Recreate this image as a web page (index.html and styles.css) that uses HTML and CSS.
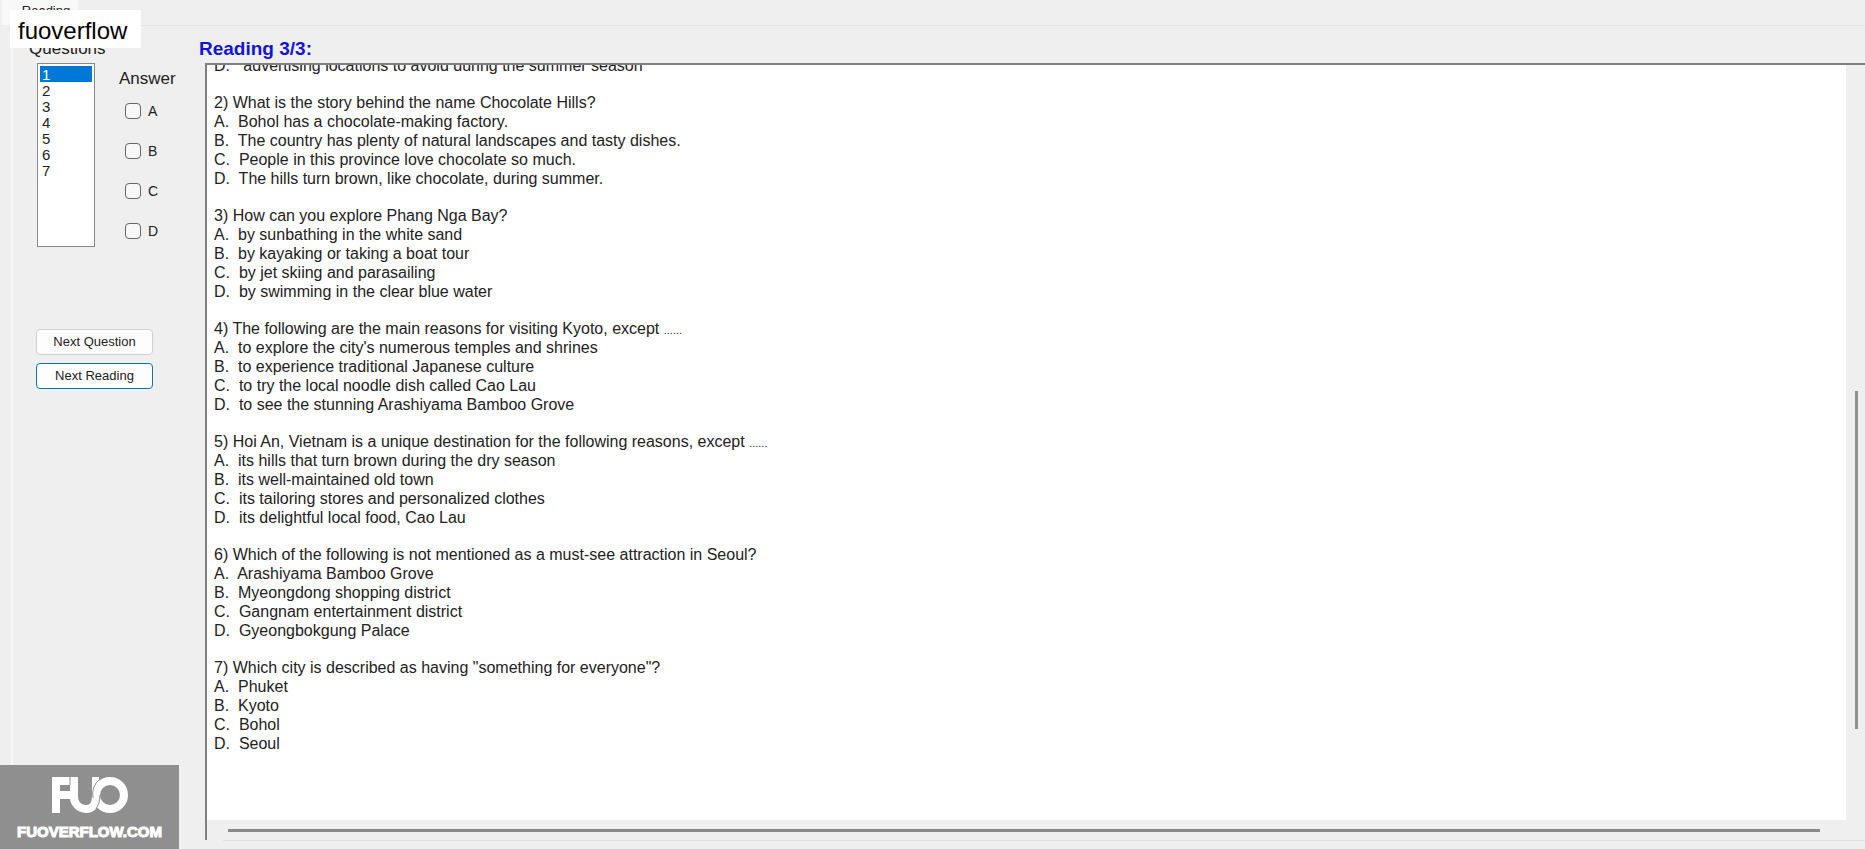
FILE: index.html
```html
<!DOCTYPE html>
<html lang="en">
<head>
<meta charset="utf-8">
<title>Reading</title>
<link rel="stylesheet" href="styles.css">
</head>
<body>
<div class="app">
  <nav class="tabs"><button class="tab" type="button">Reading</button></nav>
  <main class="pane">
    <aside class="side">
      <label class="heading" for="questions">Questions</label>
      <div class="pickers">
        <select class="question-list" id="questions" size="7">
          <option selected>1</option>
          <option>2</option>
          <option>3</option>
          <option>4</option>
          <option>5</option>
          <option>6</option>
          <option>7</option>
        </select>
        <fieldset class="answers">
          <legend class="answers-title">Answer</legend>
          <label class="answer"><input class="check" type="checkbox">A</label>
          <label class="answer"><input class="check" type="checkbox">B</label>
          <label class="answer"><input class="check" type="checkbox">C</label>
          <label class="answer"><input class="check" type="checkbox">D</label>
        </fieldset>
      </div>
      <div class="actions">
        <button class="btn" type="button">Next Question</button>
        <button class="btn btn-focus" type="button">Next Reading</button>
      </div>
    </aside>
    <section class="reader">
      <h1 class="title">Reading 3/3:</h1>
      <div class="frame">
        <div class="page">
          <div class="text">
            <div class="block">
              <p>D.   advertising locations to avoid during the summer season</p>
            </div>
            <div class="block">
              <p>2) What is the story behind the name Chocolate Hills?</p>
              <p>A.  Bohol has a chocolate-making factory.</p>
              <p>B.  The country has plenty of natural landscapes and tasty dishes.</p>
              <p>C.  People in this province love chocolate so much.</p>
              <p>D.  The hills turn brown, like chocolate, during summer.</p>
            </div>
            <div class="block">
              <p>3) How can you explore Phang Nga Bay?</p>
              <p>A.  by sunbathing in the white sand</p>
              <p>B.  by kayaking or taking a boat tour</p>
              <p>C.  by jet skiing and parasailing</p>
              <p>D.  by swimming in the clear blue water</p>
            </div>
            <div class="block">
              <p>4) The following are the main reasons for visiting Kyoto, except <span class="dots">......</span></p>
              <p>A.  to explore the city's numerous temples and shrines</p>
              <p>B.  to experience traditional Japanese culture</p>
              <p>C.  to try the local noodle dish called Cao Lau</p>
              <p>D.  to see the stunning Arashiyama Bamboo Grove</p>
            </div>
            <div class="block">
              <p>5) Hoi An, Vietnam is a unique destination for the following reasons, except <span class="dots">......</span></p>
              <p>A.  its hills that turn brown during the dry season</p>
              <p>B.  its well-maintained old town</p>
              <p>C.  its tailoring stores and personalized clothes</p>
              <p>D.  its delightful local food, Cao Lau</p>
            </div>
            <div class="block">
              <p>6) Which of the following is not mentioned as a must-see attraction in Seoul?</p>
              <p>A.  Arashiyama Bamboo Grove</p>
              <p>B.  Myeongdong shopping district</p>
              <p>C.  Gangnam entertainment district</p>
              <p>D.  Gyeongbokgung Palace</p>
            </div>
            <div class="block">
              <p>7) Which city is described as having "something for everyone"?</p>
              <p>A.  Phuket</p>
              <p>B.  Kyoto</p>
              <p>C.  Bohol</p>
              <p>D.  Seoul</p>
            </div>
          </div>
        </div>
        <div class="track-y"><div class="thumb-y"></div></div>
        <div class="track-x"><div class="thumb-x"></div></div>
      </div>
      <div class="foot"></div>
    </section>
  </main>
  <div class="tag">fuoverflow</div>
  <div class="brand">
    <svg class="brand-logo" viewBox="0 0 76 37" aria-hidden="true">
      <g fill="none" stroke="#fff" stroke-width="8">
        <path d="M4 36V4H18M7 18H18"/>
        <path d="M22 0V19A12 12 0 0 0 34 32C43 32 44 24 44 17"/>
        <circle cx="58" cy="18" r="14"/>
      </g>
      <path d="M40 0H47V6Q42 10 40 16Z" fill="#fff"/>
      <path d="M18 0V8" stroke="#8f8f8f"/>
      <path d="M48 2Q39 9 41 21M48 18Q48 27 44 32" fill="none" stroke="#8f8f8f"/>
    </svg>
    <span class="brand-name">FUOVERFLOW.COM</span>
  </div>
</div>
</body>
</html>
```
FILE: styles.css
```css
* {
  box-sizing: border-box;
}

body {
  margin: 0;
  background: #efefef;
  color: #222;
  font-family: "Liberation Sans", Arial, sans-serif;
  font-size: 16px;
}

.app {
  position: relative;
  display: flex;
  flex-direction: column;
  height: 100vh;
  overflow: hidden;
}

.tabs {
  display: flex;
  height: 25px;
  padding-left: 2px;
}

.tab {
  width: 76px;
  padding: 0 0 4px 12px;
  border: 0;
  background: #f8f8f8;
  color: #222;
  font: 13px/20px "Liberation Sans", Arial, sans-serif;
}

.pane {
  display: flex;
  flex: 1;
  min-height: 0;
  margin-left: 11px;
  border-top: 1px solid #e4e4e4;
  border-left: 2px solid #f8f8f8;
}

.side {
  flex: none;
  width: 192px;
  padding: 13px 0 0 16px;
}

.heading {
  display: block;
  font-size: 17px;
  line-height: 20px;
}

.pickers {
  display: flex;
  gap: 24px;
  padding: 4px 0 0 8px;
}

.question-list {
  width: 58px;
  height: 184px;
  padding: 2px;
  border: 1px solid #888;
  border-radius: 0;
  outline: 0;
  background: #fff;
  color: #222;
  font: 15px/16px "Liberation Sans", Arial, sans-serif;
  overflow: hidden;
}

.question-list option {
  height: 16px;
  min-height: 16px;
  padding: 0 2px;
  line-height: 16px;
}

.question-list option:checked {
  background: #0078d7 linear-gradient(#0078d7, #0078d7);
  color: #fff;
  -webkit-text-fill-color: #fff;
}

.answers {
  display: flex;
  flex-direction: column;
  gap: 20px;
  min-width: 0;
  margin: 0;
  padding: 12px 0 0;
  border: 0;
}

.answers-title {
  padding: 6px 0 0;
  font-size: 17px;
  line-height: 20px;
}

.answer {
  display: flex;
  align-items: center;
  gap: 7px;
  height: 20px;
  padding-left: 6px;
  font-size: 14px;
}

.check {
  appearance: none;
  width: 16px;
  height: 16px;
  margin: 0;
  border: 1px solid #666;
  border-radius: 4px;
  background: #f8f8f8;
}

.actions {
  display: flex;
  flex-direction: column;
  gap: 8px;
  width: 124px;
  padding: 82px 0 0 7px;
}

.btn {
  height: 26px;
  padding: 0;
  border: 1px solid #d0d0d0;
  border-radius: 4px;
  background: #fdfdfd;
  color: #222;
  font: 13px/20px "Liberation Sans", Arial, sans-serif;
}

.btn-focus {
  border: 1px solid #0078b8;
}

.reader {
  display: flex;
  flex: 1;
  flex-direction: column;
  min-width: 0;
}

.title {
  margin: 0 0 0 -6px;
  padding: 12px 0 3px;
  color: #1414d8;
  font-size: 19px;
  line-height: 22px;
}

.frame {
  display: grid;
  flex: 1;
  grid-template-rows: 1fr 20px;
  grid-template-columns: 1fr 19px;
  min-height: 0;
  border-top: 2px solid #808080;
  border-left: 2px solid #808080;
}

.page {
  min-height: 0;
  overflow: hidden;
  background: #fff;
}

.text {
  display: flex;
  flex-direction: column;
  gap: 18px;
  margin-top: -9px;
  padding-left: 7px;
}

.block p {
  margin: 0;
  line-height: 19px;
  white-space: pre;
}

.dots {
  font-size: 11px;
  line-height: 1;
}

.track-y {
  padding: 326px 0 0 9px;
}

.thumb-y {
  width: 3px;
  height: 338px;
  background: #909090;
}

.track-x {
  padding: 9px 26px 0 21px;
}

.thumb-x {
  height: 3px;
  background: #888;
}

.foot {
  height: 9px;
  margin-left: 18px;
  border-top: 1px solid #e2e2e2;
}

.tag {
  position: absolute;
  top: 10px;
  left: 10px;
  padding: 3px 14px 0 8px;
  background: #fff;
  color: #000;
  font-size: 24px;
  line-height: 35px;
}

.brand {
  position: absolute;
  bottom: 0;
  left: 0;
  display: flex;
  flex-direction: column;
  align-items: center;
  width: 179px;
  height: 84px;
  padding-top: 12px;
  background: #8f8f8f;
}

.brand-logo {
  width: 76px;
  height: 37px;
}

.brand-name {
  padding-top: 8px;
  color: #fff;
  font-family: "Liberation Sans Narrow", "Liberation Sans", sans-serif;
  font-size: 15px;
  font-weight: 700;
  line-height: 20px;
  -webkit-text-stroke: 1px #fff;
}
```
